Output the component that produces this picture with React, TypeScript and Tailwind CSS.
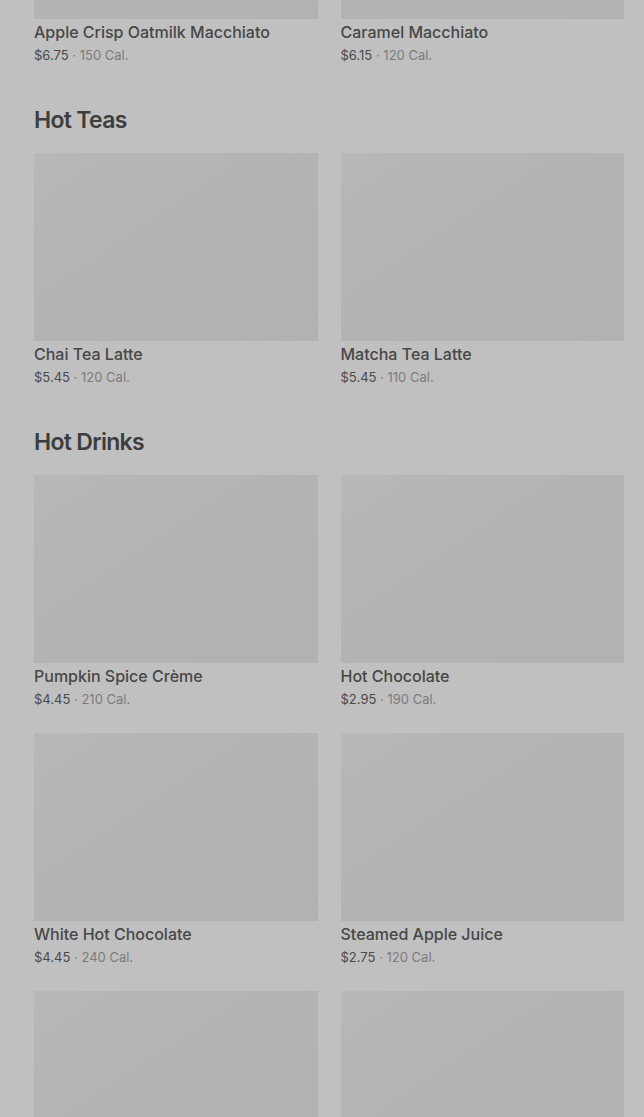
type Item = { name?: string; price?: string; cal?: string };

const SECTIONS: { title: string | null; items: Item[] }[] = [
  {
    title: null,
    items: [
      { name: "Apple Crisp Oatmilk Macchiato", price: "$6.75", cal: "150 Cal." },
      { name: "Caramel Macchiato", price: "$6.15", cal: "120 Cal." },
    ],
  },
  {
    title: "Hot Teas",
    items: [
      { name: "Chai Tea Latte", price: "$5.45", cal: "120 Cal." },
      { name: "Matcha Tea Latte", price: "$5.45", cal: "110 Cal." },
    ],
  },
  {
    title: "Hot Drinks",
    items: [
      { name: "Pumpkin Spice Crème", price: "$4.45", cal: "210 Cal." },
      { name: "Hot Chocolate", price: "$2.95", cal: "190 Cal." },
      { name: "White Hot Chocolate", price: "$4.45", cal: "240 Cal." },
      { name: "Steamed Apple Juice", price: "$2.75", cal: "120 Cal." },
      {},
      {},
    ],
  },
];

export default function App() {
  return (
    <div className="h-[1117px] overflow-hidden bg-[#c0c0c0] font-['Inter','Liberation_Sans',sans-serif]">
      <div className="pl-[34px] pr-[20px] -mt-[169px]">
        {SECTIONS.map((section, s) => (
          <section key={s} className={section.title ? "mt-[39px]" : ""}>
            {section.title && (
              <h2 className="mb-[17px] text-[23px] leading-8 font-semibold tracking-[-0.03em] text-[#3d3d3d]">
                {section.title}
              </h2>
            )}
            <div className="grid grid-cols-2 gap-x-[23px] gap-y-6">
              {section.items.map((item, i) => (
                <div key={i}>
                  {/* skeleton image */}
                  <div className="h-[188px] bg-gradient-to-br from-[#b8b8b8] via-[#b3b3b3] to-[#b2b2b2]" />
                  {item.name && (
                    <>
                      <p className="mt-px text-base leading-6 font-medium text-[#474747]">
                        {item.name}
                      </p>
                      <p className="mt-px text-[13px] leading-5 text-[#4a4a4a]">
                        {item.price}
                        <span className="text-[#7c7c7c]"> · {item.cal}</span>
                      </p>
                    </>
                  )}
                </div>
              ))}
            </div>
          </section>
        ))}
      </div>
    </div>
  );
}
